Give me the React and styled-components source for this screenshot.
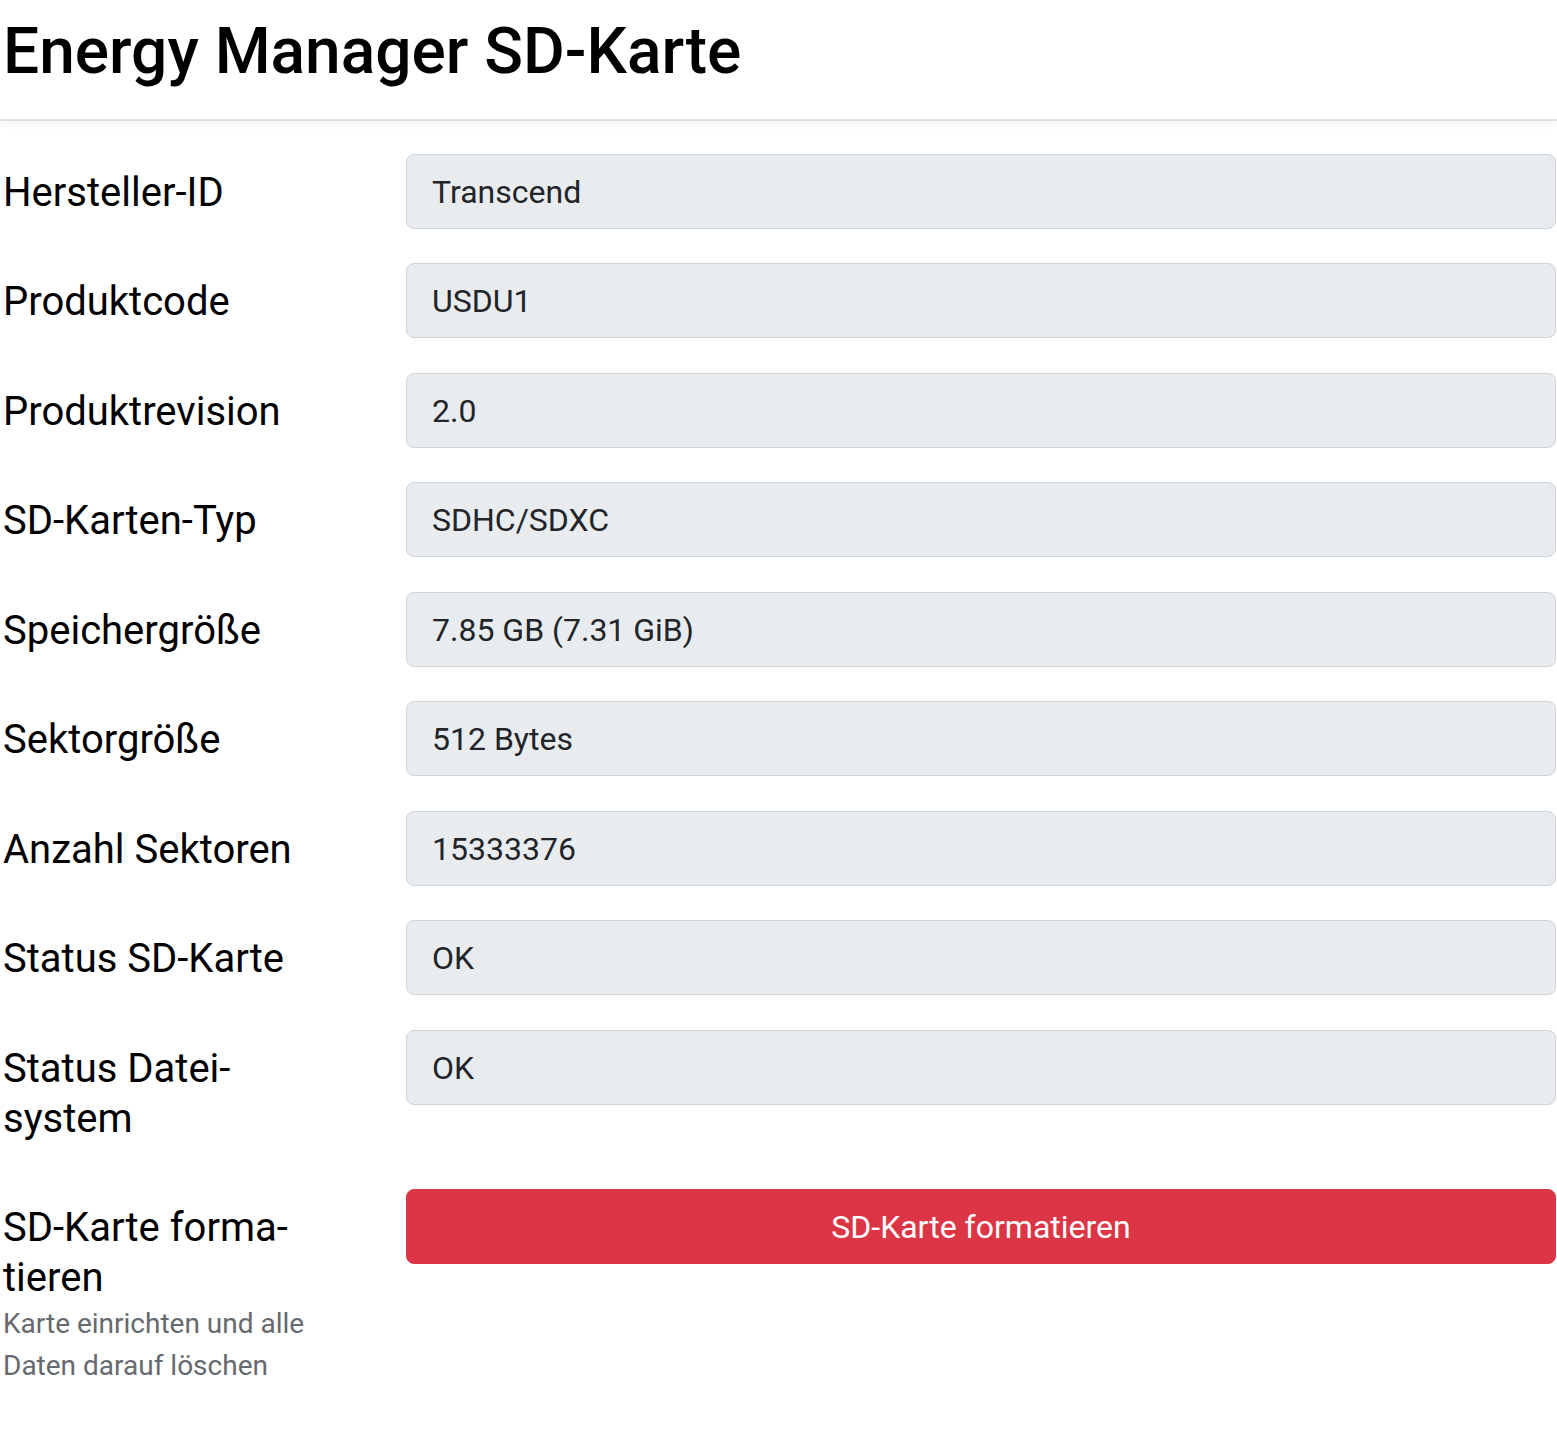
import React from "react";
import styled, { createGlobalStyle } from "styled-components";

const GlobalStyle = createGlobalStyle`
  html, body {
    margin: 0;
    padding: 0;
    background: #ffffff;
  }
  body {
    font-family: Roboto, "Liberation Sans", Arial, sans-serif;
    color: #212529;
  }
  * { box-sizing: border-box; }
`;

const Page = styled.div`
  padding: 0 1px 40px 1px;
`;

const Header = styled.header`
  padding: 14px 0 28px 3px;
  border-bottom: 2px solid #dee2e6;
  box-shadow: 0 3px 8px rgba(0, 0, 0, 0.05);
  margin: 0 -1px 33px -1px;
`;

const Title = styled.h1`
  margin: 0;
  font-size: 64px;
  font-weight: 500;
  line-height: 1.2;
  color: #000;
`;

const Form = styled.div`
  display: flex;
  flex-direction: column;
  gap: 34.5px;
`;

const Row = styled.div`
  display: grid;
  grid-template-columns: 322px 1fr;
  column-gap: 83px;
  align-items: start;
`;

const LabelCol = styled.div`
  display: flex;
  flex-direction: column;
  padding-left: 2px;
`;

const Label = styled.label`
  padding: 14px 0 11px 0;
  font-size: 40px;
  line-height: 50px;
  color: #000;
`;

const Description = styled.span`
  margin-top: -12.5px;
  padding-top: 1px;
  font-size: 28px;
  line-height: 42px;
  color: #666a6e;
`;

const Field = styled.div`
  height: 75px;
  padding: 2px 25px 0 25px;
  display: flex;
  align-items: center;
  background: #e9ecef;
  border: 1px solid #ced4da;
  border-radius: 8px;
  font-size: 32px;
  line-height: 45px;
  color: #212529;
`;

const DangerButton = styled.button`
  height: 75px;
  width: 100%;
  padding-top: 2px;
  border: 1px solid #dc3545;
  border-radius: 8px;
  background: #dc3545;
  color: #ffffff;
  font-family: Roboto, "Liberation Sans", Arial, sans-serif;
  font-size: 32px;
  line-height: 45px;
  cursor: pointer;
`;

const rows = [
  ["Hersteller-ID", "Transcend"],
  ["Produktcode", "USDU1"],
  ["Produktrevision", "2.0"],
  ["SD-Karten-Typ", "SDHC/SDXC"],
  ["Speichergröße", "7.85 GB (7.31 GiB)"],
  ["Sektorgröße", "512 Bytes"],
  ["Anzahl Sektoren", "15333376"],
  ["Status SD-Karte", "OK"],
  ["Status Datei\u00ADsystem", "OK"],
];

export default function App() {
  return (
    <Page lang="de">
      <GlobalStyle />
      <Header>
        <Title>Energy Manager SD-Karte</Title>
      </Header>
      <Form>
        {rows.map(([label, value]) => (
          <Row key={label}>
            <LabelCol>
              <Label>{label}</Label>
            </LabelCol>
            <Field>{value}</Field>
          </Row>
        ))}
        <Row>
          <LabelCol>
            <Label>SD-Karte forma{"\u00AD"}tieren</Label>
            <Description>Karte einrichten und alle Daten darauf löschen</Description>
          </LabelCol>
          <DangerButton type="button">SD-Karte formatieren</DangerButton>
        </Row>
      </Form>
    </Page>
  );
}
